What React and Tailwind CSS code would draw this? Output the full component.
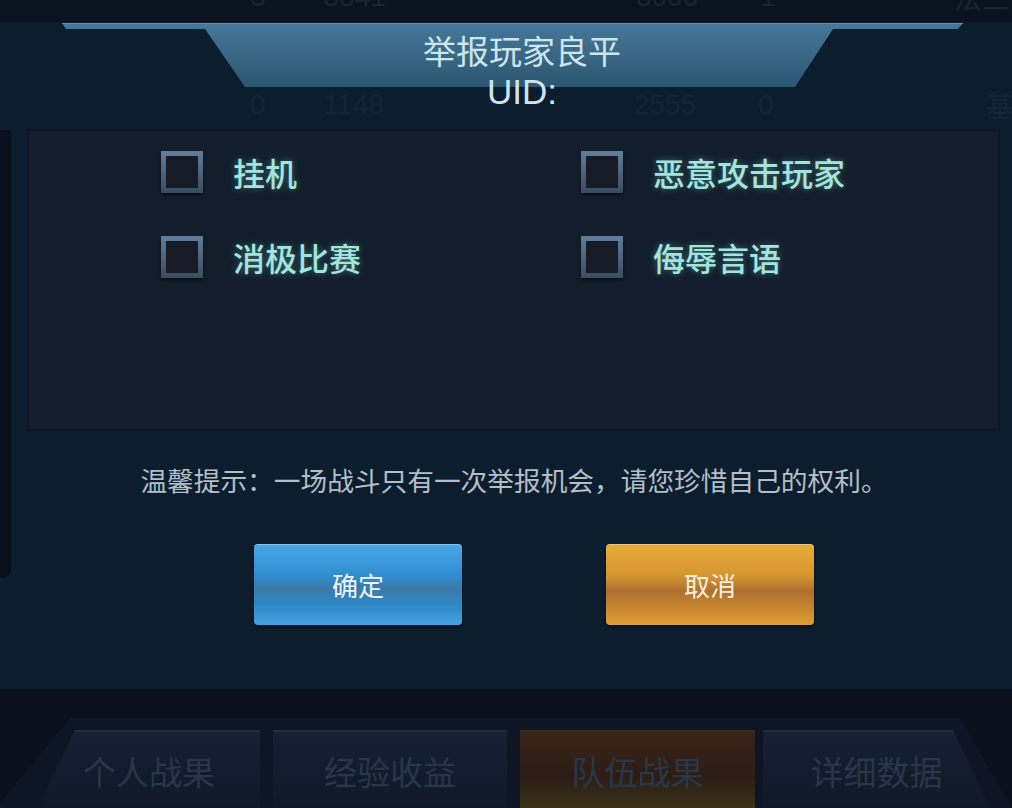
import React, { useState } from "react";

const CJK = "font-['Noto_Sans_CJK_SC','Noto_Sans',sans-serif]";

const reasons = [
  ["挂机", "恶意攻击玩家"],
  ["消极比赛", "侮辱言语"],
];

const tabs = [
  { label: "个人战果", w: "w-[222px]", ml: "ml-[38px]", clip: "[clip-path:polygon(37px_0,100%_0,100%_100%,0_100%)]" },
  { label: "经验收益", w: "w-[234px]", ml: "ml-[13px]", clip: "" },
  { label: "队伍战果", w: "w-[235px]", ml: "ml-[13px]", clip: "", active: true },
  { label: "详细数据", w: "w-[227px]", ml: "ml-[8px]", clip: "[clip-path:polygon(0_0,190px_0,100%_100%,0_100%)]" },
];

const Check = ({ label, checked, onClick }) => (
  <button onClick={onClick} className="flex items-center gap-[30px] text-left">
    <div className="w-[42px] h-[42px] p-[5px] bg-gradient-to-b from-[#627e9a] to-[#3b4c61] shadow-[0_2px_3px_rgba(0,0,0,0.6)]">
      <div className="w-full h-full bg-[#161b25] flex items-center justify-center">
        {checked && <div className="w-[18px] h-[18px] bg-[#8fe0d6]" />}
      </div>
    </div>
    <span className={`${CJK} text-[32px] leading-[40px] font-medium text-[#a4e4dc] [text-shadow:0_0_6px_rgba(110,220,210,0.45)]`}>
      {label}
    </span>
  </button>
);

const App = () => {
  const [checked, setChecked] = useState({});

  const toggle = (k) => setChecked((prev) => ({ ...prev, [k]: !prev[k] }));

  return (
    <div className="w-[1012px] h-[808px] overflow-hidden bg-[#0a111d] flex flex-col">
      {/* background row peeking above dialog */}
      <div className="h-[22px] bg-[#0b1320] relative overflow-hidden">
        <div className="absolute left-0 right-0 -top-[18px] flex text-[28px] leading-[30px] text-[#19242f] font-['Liberation_Sans',sans-serif]">
          <span className="ml-[250px]">3</span>
          <span className="ml-[58px]">3841</span>
          <span className="ml-[250px]">3006</span>
          <span className="ml-[62px]">1</span>
          <span className={`${CJK} ml-[178px]`}>法三</span>
        </div>
      </div>

      {/* dialog */}
      <div className="h-[669px] bg-[#0c1e2e] relative flex flex-col border-b-2 border-[#08121c]">
        <div className="absolute left-0 top-[108px] w-[11px] h-[448px] bg-[#08111b] rounded-br-[8px]" />

        <div className="relative h-[107px] flex flex-col items-center pl-[32px]">
          <svg className="absolute inset-0" width="1012" height="107" viewBox="0 0 1012 107">
            <defs>
              <linearGradient id="hdr" x1="0" y1="0" x2="0" y2="1">
                <stop offset="0" stopColor="#46789a" />
                <stop offset="1" stopColor="#2c5670" />
              </linearGradient>
            </defs>
            <polygon points="62,1 963,1 958,7 833,7 795,65 245,65 205,7 66,7" fill="url(#hdr)" />
            <line x1="62" y1="1.5" x2="963" y2="1.5" stroke="#5d8fac" strokeWidth="1" />
          </svg>
          <div className="absolute left-0 right-0 top-[66px] flex text-[28px] leading-[34px] text-[#132537] font-['Liberation_Sans',sans-serif]">
            <span className="ml-[250px]">0</span>
            <span className="ml-[58px]">1148</span>
            <span className="ml-[250px]">2555</span>
            <span className="ml-[62px]">0</span>
            <span className={`${CJK} ml-[212px]`}>基</span>
          </div>
          <h1 className={`${CJK} relative mt-[9px] text-[33px] leading-[38px] text-[#cde6ee]`}>举报玩家良平</h1>
          <div className="relative mt-[3px] text-[35px] leading-[40px] text-[#cde6ee] font-['Liberation_Sans_Narrow','Liberation_Sans',sans-serif]">UID:</div>
        </div>

        <div className="ml-[27px] mr-[12px] h-[302px] bg-[#131e2c] border-2 border-[#0e1620] pl-[132px] pt-[20px] flex flex-col gap-[43px]">
          {reasons.map((row, i) => (
            <div key={i} className="grid grid-cols-[420px_1fr]">
              {row.map((label) => (
                <Check key={label} label={label} checked={!!checked[label]} onClick={() => toggle(label)} />
              ))}
            </div>
          ))}
        </div>

        <p className={`${CJK} mt-[33px] text-center text-[26.7px] leading-[32px] text-[#b3bfc8] pl-[16px]`}>
          温馨提示：一场战斗只有一次举报机会，请您珍惜自己的权利。
        </p>

        <div className="mt-[48px] flex pl-[254px] gap-[144px]">
          <button className="w-[208px] h-[81px] rounded-[4px] bg-[linear-gradient(180deg,#49a9e6_0%,#2f8ccf_40%,#3a7aa8_55%,#2f88c6_75%,#45a2e0_100%)] shadow-[0_2px_3px_rgba(0,0,0,0.5),inset_0_1px_0_rgba(255,255,255,0.35)] flex items-center justify-center">
            <span className={`${CJK} text-[26px] text-[#eef4fa]`}>确定</span>
          </button>
          <button className="w-[208px] h-[81px] rounded-[4px] bg-[linear-gradient(180deg,#e8ac3a_0%,#d49530_40%,#ae7030_58%,#c8882e_80%,#dc9e36_100%)] shadow-[0_2px_3px_rgba(0,0,0,0.5),inset_0_1px_0_rgba(255,255,255,0.3)] flex items-center justify-center">
            <span className={`${CJK} text-[26px] text-[#fbf0e2]`}>取消</span>
          </button>
        </div>
      </div>

      {/* bottom tabs, dimmed behind dialog */}
      <div className="flex-1 pt-[27px]">
        <div className="h-full bg-[#0e1524] [clip-path:polygon(70px_0,960px_0,100%_90px,100%_100%,0_100%,0_85px)] pt-[12px] flex">
          {tabs.map((t) => (
            <div
              key={t.label}
              className={`${t.w} ${t.ml} ${t.clip} h-full border-t-2 flex justify-center pt-[19px] ${
                t.active
                  ? "bg-[linear-gradient(180deg,#3a2418,#2c1d15_60%,#3a3318)] border-[#3b2a1f]"
                  : "bg-[linear-gradient(180deg,#162033,#101828)] border-[#1e2b42]"
              }`}
            >
              <span className={`${CJK} text-[33px] leading-[40px] text-[#283649]`}>{t.label}</span>
            </div>
          ))}
        </div>
      </div>
    </div>
  );
};

export default App;
